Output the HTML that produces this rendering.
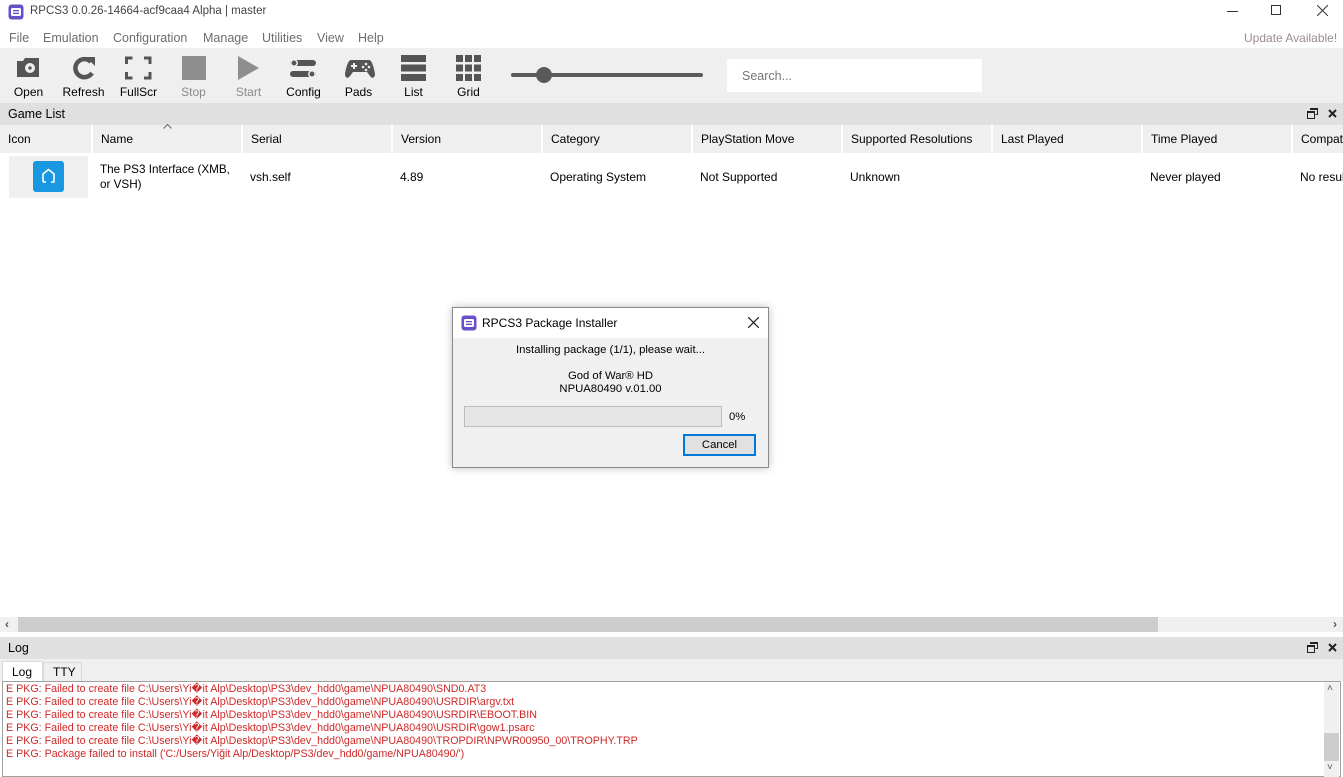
<!DOCTYPE html>
<html><head><meta charset="utf-8"><style>
*{margin:0;padding:0;box-sizing:border-box}
body{width:1343px;height:777px;overflow:hidden;background:#fff;font-family:"Liberation Sans",sans-serif;font-size:12px;color:#000;position:relative}
.a{position:absolute}
.menu span{position:absolute;top:31px;color:#6d6d6d;font-size:12.5px}
.tb{position:absolute;top:48px;width:55px;height:55px;text-align:center}
.tb svg{position:absolute;left:14px;top:7px}
.tb div{position:absolute;left:0;right:0;top:37px;font-size:12px}
.hc{position:absolute;top:125px;height:28px;background:#efefef;padding:7px 0 0 8px;font-size:12px}
.cell{position:absolute;top:170px;font-size:12px}
.log div{height:13px;line-height:13px;color:#d02828;font-size:10.7px;white-space:nowrap}
</style></head><body>
<!-- title -->
<svg class="a" style="left:8px;top:4px" width="16" height="16"><rect x="0.5" y="0.5" width="15" height="15" rx="3" fill="#6a50c8"/><rect x="3" y="4" width="10" height="8" rx="1.5" fill="#fff"/><rect x="5" y="6" width="6" height="1.3" fill="#6a50c8"/><rect x="5" y="8.7" width="6" height="1.3" fill="#6a50c8"/></svg>
<div class="a" style="left:30px;top:5px;font-size:11.5px;color:#444">RPCS3 0.0.26-14664-acf9caa4 Alpha | master</div>
<div class="a" style="left:1227px;top:11px;width:11px;height:1px;background:#333"></div>
<div class="a" style="left:1271px;top:5px;width:10px;height:10px;border:1px solid #333"></div>
<svg class="a" style="left:1317px;top:5px" width="11" height="11"><path d="M0 0L11 11M11 0L0 11" stroke="#333" stroke-width="1"/></svg>
<div class="menu"><span style="left:9px">File</span><span style="left:43px">Emulation</span><span style="left:113px">Configuration</span><span style="left:203px">Manage</span><span style="left:262px">Utilities</span><span style="left:317px">View</span><span style="left:358px">Help</span><span style="left:1244px;color:#9a8a96;font-size:12px">Update Available!</span></div>
<!-- toolbar -->
<div class="a" style="left:0;top:48px;width:1343px;height:55px;background:#efefef"></div>
<div class="tb" style="left:1px"><svg width="28" height="26"><path d="M2 6h6l2-3h14v19H2z" fill="#555"/><circle cx="15" cy="13" r="5" fill="#efefef"/><circle cx="15" cy="13" r="1.7" fill="#555"/></svg><div>Open</div></div>
<div class="tb" style="left:56px"><svg width="28" height="26"><path d="M21 7A9 9 0 1 0 22 18" fill="none" stroke="#555" stroke-width="4.5"/><path d="M16 2h9v9z" fill="#555"/></svg><div>Refresh</div></div>
<div class="tb" style="left:111px"><svg width="28" height="26"><path d="M1.5 9V3h6M19 3h6v6M25 17v6h-6M7.5 23h-6v-6" fill="none" stroke="#555" stroke-width="3"/></svg><div>FullScr</div></div>
<div class="tb" style="left:166px;color:#8a8a8a"><svg width="28" height="26"><rect x="2" y="1" width="24" height="24" fill="#8e8e8e"/></svg><div>Stop</div></div>
<div class="tb" style="left:221px;color:#8a8a8a"><svg width="28" height="26"><path d="M3 1L24 13L3 25z" fill="#8e8e8e"/></svg><div>Start</div></div>
<div class="tb" style="left:276px"><svg width="28" height="26"><rect x="0" y="5" width="26" height="6" rx="3" fill="#555"/><rect x="0" y="16" width="26" height="6" rx="3" fill="#555"/><circle cx="4" cy="8" r="3.2" fill="#555" stroke="#efefef" stroke-width="1.5"/><circle cx="22" cy="19" r="3.2" fill="#555" stroke="#efefef" stroke-width="1.5"/></svg><div>Config</div></div>
<div class="tb" style="left:331px"><svg width="30" height="26"><path d="M6 5h18c3 0 5 8 6 14c0 4-3 5-5 2l-3-4H8l-3 4c-2 3-5 2-5-2C1 13 3 5 6 5z" fill="#555"/><path d="M6 11h6M9 8v6" stroke="#efefef" stroke-width="2"/><circle cx="21" cy="9" r="1.3" fill="#efefef"/><circle cx="24" cy="12" r="1.3" fill="#efefef"/><circle cx="18" cy="12" r="1.3" fill="#efefef"/><circle cx="21" cy="15" r="1.3" fill="#efefef"/></svg><div>Pads</div></div>
<div class="tb" style="left:386px"><svg width="28" height="26"><rect x="1" y="0" width="25" height="7" fill="#555"/><rect x="1" y="9.5" width="25" height="7" fill="#555"/><rect x="1" y="19" width="25" height="7" fill="#555"/></svg><div>List</div></div>
<div class="tb" style="left:441px"><svg width="28" height="26"><g fill="#555"><rect x="1" y="0" width="7" height="7"/><rect x="10" y="0" width="7" height="7"/><rect x="19" y="0" width="7" height="7"/><rect x="1" y="9.5" width="7" height="7"/><rect x="10" y="9.5" width="7" height="7"/><rect x="19" y="9.5" width="7" height="7"/><rect x="1" y="19" width="7" height="7"/><rect x="10" y="19" width="7" height="7"/><rect x="19" y="19" width="7" height="7"/></g></svg><div>Grid</div></div>
<div class="a" style="left:511px;top:73px;width:192px;height:4px;border-radius:2px;background:#5a5a5a"></div>
<div class="a" style="left:536px;top:67px;width:16px;height:16px;border-radius:50%;background:#5a5a5a"></div>
<div class="a" style="left:727px;top:59px;width:255px;height:33px;background:#fff;padding:10px 0 0 15px;color:#777;font-size:12.5px">Search...</div>
<!-- game list header -->
<div class="a" style="left:0;top:103px;width:1343px;height:22px;background:#e0e0e0;padding:4px 0 0 8px;font-size:12.5px">Game List</div>
<svg class="a" style="left:1307px;top:108px" width="11" height="11"><path d="M3.5 0.5h7v6h-2M0.5 3.5h7v7h-7z" fill="none" stroke="#222"/><rect x="3" y="0" width="8" height="2" fill="#222"/><rect x="0" y="3" width="8" height="2" fill="#222"/></svg>
<svg class="a" style="left:1328px;top:109px" width="9" height="9"><path d="M1 1L8 8M8 1L1 8" stroke="#222" stroke-width="2"/></svg>
<div class="hc" style="left:0;width:91px">Icon</div>
<div class="hc" style="left:93px;width:148px">Name</div>
<svg class="a" style="left:163px;top:124px" width="9" height="5"><path d="M0.5 4.5L4.5 0.5L8.5 4.5" fill="none" stroke="#666"/></svg>
<div class="hc" style="left:243px;width:148px">Serial</div>
<div class="hc" style="left:393px;width:148px">Version</div>
<div class="hc" style="left:543px;width:148px">Category</div>
<div class="hc" style="left:693px;width:148px">PlayStation Move</div>
<div class="hc" style="left:843px;width:148px">Supported Resolutions</div>
<div class="hc" style="left:993px;width:148px">Last Played</div>
<div class="hc" style="left:1143px;width:148px">Time Played</div>
<div class="hc" style="left:1293px;width:60px">Compat</div>
<!-- row -->
<div class="a" style="left:9px;top:156px;width:79px;height:42px;background:#efefef"></div>
<svg class="a" style="left:33px;top:161px" width="32" height="32"><rect width="31" height="31" rx="3" fill="#1898e0"/><path d="M10 21V13l5.5-4.5L21 13v8h-3" fill="none" stroke="#fff" stroke-width="1.6"/><path d="M10 21h3" stroke="#fff" stroke-width="1.6"/></svg>
<div class="a" style="left:100px;top:162px;line-height:15px;font-size:11.7px">The PS3 Interface (XMB,<br>or VSH)</div>
<div class="cell" style="left:250px">vsh.self</div>
<div class="cell" style="left:400px">4.89</div>
<div class="cell" style="left:550px">Operating System</div>
<div class="cell" style="left:700px">Not Supported</div>
<div class="cell" style="left:850px">Unknown</div>
<div class="cell" style="left:1150px">Never played</div>
<div class="cell" style="left:1300px;white-space:nowrap">No resul</div>
<!-- hscroll -->
<div class="a" style="left:0;top:617px;width:1343px;height:15px;background:#f0f0f0"></div>
<div class="a" style="left:18px;top:617px;width:1140px;height:15px;background:#cdcdcd"></div>
<div class="a" style="left:5px;top:617px;font-size:12px;color:#555;font-weight:bold">‹</div>
<div class="a" style="left:1333px;top:617px;font-size:12px;color:#555;font-weight:bold">›</div>
<!-- log -->
<div class="a" style="left:0;top:637px;width:1343px;height:22px;background:#e0e0e0;padding:4px 0 0 8px;font-size:12.5px">Log</div>
<svg class="a" style="left:1307px;top:642px" width="11" height="11"><path d="M3.5 0.5h7v6h-2M0.5 3.5h7v7h-7z" fill="none" stroke="#222"/><rect x="3" y="0" width="8" height="2" fill="#222"/><rect x="0" y="3" width="8" height="2" fill="#222"/></svg>
<svg class="a" style="left:1328px;top:643px" width="9" height="9"><path d="M1 1L8 8M8 1L1 8" stroke="#222" stroke-width="2"/></svg>
<div class="a" style="left:0;top:659px;width:1343px;height:22px;background:#efefef"></div>
<div class="a" style="left:2px;top:661px;width:41px;height:21px;background:#fff;border:1px solid #d9d9d9;border-bottom:none;padding:3px 0 0 9px">Log</div>
<div class="a" style="left:43px;top:662px;width:39px;height:19px;background:#efefef;border:1px solid #d9d9d9;border-bottom:none;padding:2px 0 0 9px">TTY</div>
<div class="a" style="left:2px;top:681px;width:1339px;height:96px;background:#fff;border:1px solid #a0a0a0"></div>
<div class="a log" style="left:6px;top:683px">
<div>E PKG: Failed to create file C:\Users\Yi�it Alp\Desktop\PS3\dev_hdd0\game\NPUA80490\SND0.AT3</div>
<div>E PKG: Failed to create file C:\Users\Yi�it Alp\Desktop\PS3\dev_hdd0\game\NPUA80490\USRDIR\argv.txt</div>
<div>E PKG: Failed to create file C:\Users\Yi�it Alp\Desktop\PS3\dev_hdd0\game\NPUA80490\USRDIR\EBOOT.BIN</div>
<div>E PKG: Failed to create file C:\Users\Yi�it Alp\Desktop\PS3\dev_hdd0\game\NPUA80490\USRDIR\gow1.psarc</div>
<div>E PKG: Failed to create file C:\Users\Yi�it Alp\Desktop\PS3\dev_hdd0\game\NPUA80490\TROPDIR\NPWR00950_00\TROPHY.TRP</div>
<div>E PKG: Package failed to install ('C:/Users/Yiğit Alp/Desktop/PS3/dev_hdd0/game/NPUA80490/')</div>
</div>
<div class="a" style="left:1324px;top:682px;width:15px;height:95px;background:#f0f0f0"></div>
<div class="a" style="left:1324px;top:733px;width:15px;height:28px;background:#cdcdcd"></div>
<div class="a" style="left:1327px;top:683px;font-size:10px;color:#555">˄</div>
<div class="a" style="left:1327px;top:762px;font-size:10px;color:#555">˅</div>
<!-- dialog -->
<div class="a" style="left:452px;top:307px;width:317px;height:161px;background:#f0f0f0;border:1px solid #8a8a8a;box-shadow:0 0 8px rgba(0,0,0,.25);font-size:11.3px">
<div style="position:absolute;left:0;top:0;width:315px;height:30px;background:#fff"></div>
<svg style="position:absolute;left:8px;top:7px" width="16" height="16"><rect x="0.5" y="0.5" width="15" height="15" rx="3" fill="#6a50c8"/><rect x="3" y="4" width="10" height="8" rx="1.5" fill="#fff"/><rect x="5" y="6" width="6" height="1.3" fill="#6a50c8"/><rect x="5" y="8.7" width="6" height="1.3" fill="#6a50c8"/></svg>
<div style="position:absolute;left:29px;top:8px;font-size:12px">RPCS3 Package Installer</div>
<svg style="position:absolute;left:295px;top:9px" width="11" height="11"><path d="M0 0L11 11M11 0L0 11" stroke="#222" stroke-width="1.2"/></svg>
<div style="position:absolute;left:0;width:315px;top:36px;text-align:center">Installing package (1/1), please wait...</div>
<div style="position:absolute;left:0;width:315px;top:62px;text-align:center;line-height:13px">God of War® HD<br>NPUA80490 v.01.00</div>
<div style="position:absolute;left:11px;top:98px;width:258px;height:21px;background:#e6e6e6;border:1px solid #bcbcbc"></div>
<div style="position:absolute;left:276px;top:103px">0%</div>
<div style="position:absolute;left:230px;top:126px;width:73px;height:22px;background:#e1e1e1;border:2px solid #0078d7;text-align:center;padding-top:3px">Cancel</div>
</div>
</body></html>
